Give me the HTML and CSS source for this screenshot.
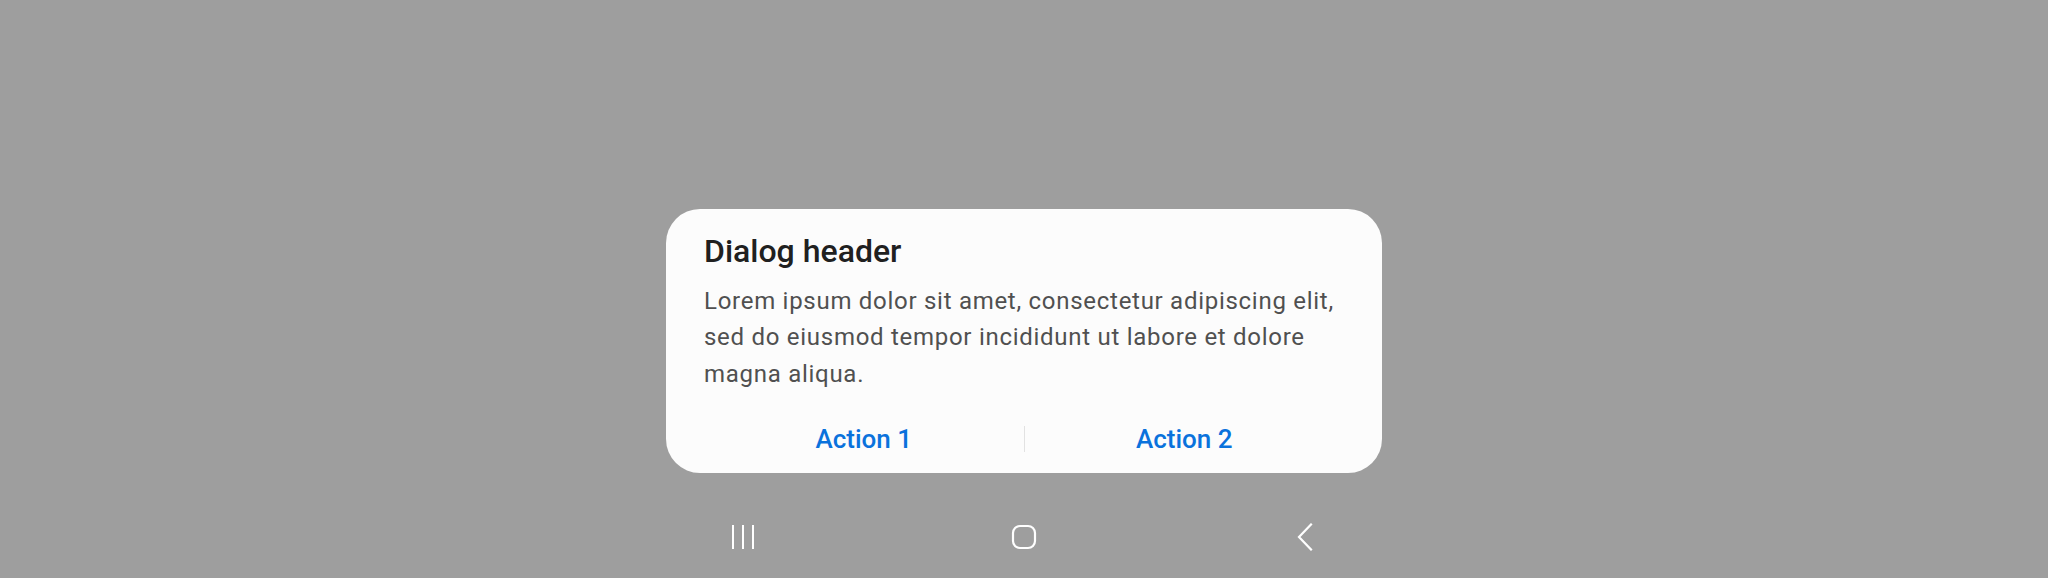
FILE: index.html
```html
<!DOCTYPE html>
<html lang="en">
<head>
<meta charset="utf-8">
<title>Dialog</title>
<link rel="stylesheet" href="styles.css">
</head>
<body>
<div class="screen">
  <div class="spacer"></div>
  <div class="dialog">
    <h1 class="dialog-title">Dialog header</h1>
    <p class="dialog-body">Lorem ipsum dolor sit amet, consectetur adipiscing elit, sed do eiusmod tempor incididunt ut labore et dolore magna aliqua.</p>
    <div class="actions">
      <button class="action">Action 1</button>
      <span class="divider"></span>
      <button class="action">Action 2</button>
    </div>
  </div>
  <nav class="navbar">
    <div class="nav-btn">
      <svg width="24" height="26" viewBox="0 0 24 26"><g fill="#fff"><rect x="1" y="1" width="2" height="24"/><rect x="11" y="1" width="2" height="24"/><rect x="21" y="1" width="2" height="24"/></g></svg>
    </div>
    <div class="nav-btn">
      <svg width="26" height="26" viewBox="0 0 26 26"><rect x="2" y="2" width="22" height="22" rx="7" fill="none" stroke="#fff" stroke-width="2.2"/></svg>
    </div>
    <div class="nav-btn">
      <svg width="26" height="28" viewBox="0 0 26 28"><path d="M19 1.5 L7 14 L19 26.5" fill="none" stroke="#fff" stroke-width="2.2" stroke-linecap="square"/></svg>
    </div>
  </nav>
</div>
</body>
</html>
```

FILE: styles.css
```css
html, body {
  margin: 0;
  padding: 0;
}
body {
  background: #9e9e9e;
  font-family: Roboto, "Liberation Sans", sans-serif;
}
.screen {
  width: 2048px;
  height: 578px;
  display: flex;
  flex-direction: column;
  align-items: center;
}
.spacer {
  flex: 1;
}
.dialog {
  width: 716px;
  box-sizing: border-box;
  background: #fcfcfc;
  border-radius: 34px;
  padding: 22px 38px 6px 38px;
  margin-bottom: 23px;
}
.dialog-title {
  margin: 0;
  font-size: 32px;
  line-height: 40px;
  font-weight: 500;
  color: #202020;
}
.dialog-body {
  margin: 12px 0 0 0;
  font-size: 24px;
  line-height: 36.5px;
  letter-spacing: 0.72px;
  font-weight: 400;
  color: #505050;
}
.actions {
  margin-top: 19px;
  height: 56px;
  display: flex;
  align-items: center;
}
.action {
  flex: 1;
  height: 56px;
  border: none;
  background: transparent;
  padding: 0;
  font-family: Roboto, "Liberation Sans", sans-serif;
  font-size: 26px;
  font-weight: 500;
  color: #0a72dc;
}
.divider {
  width: 1px;
  height: 26px;
  background: #e2e2e2;
}
.navbar {
  height: 82px;
  display: flex;
  align-items: center;
  justify-content: center;
}
.nav-btn {
  width: 281px;
  height: 82px;
  display: flex;
  align-items: center;
  justify-content: center;
}
.nav-btn svg {
  display: block;
}
```
